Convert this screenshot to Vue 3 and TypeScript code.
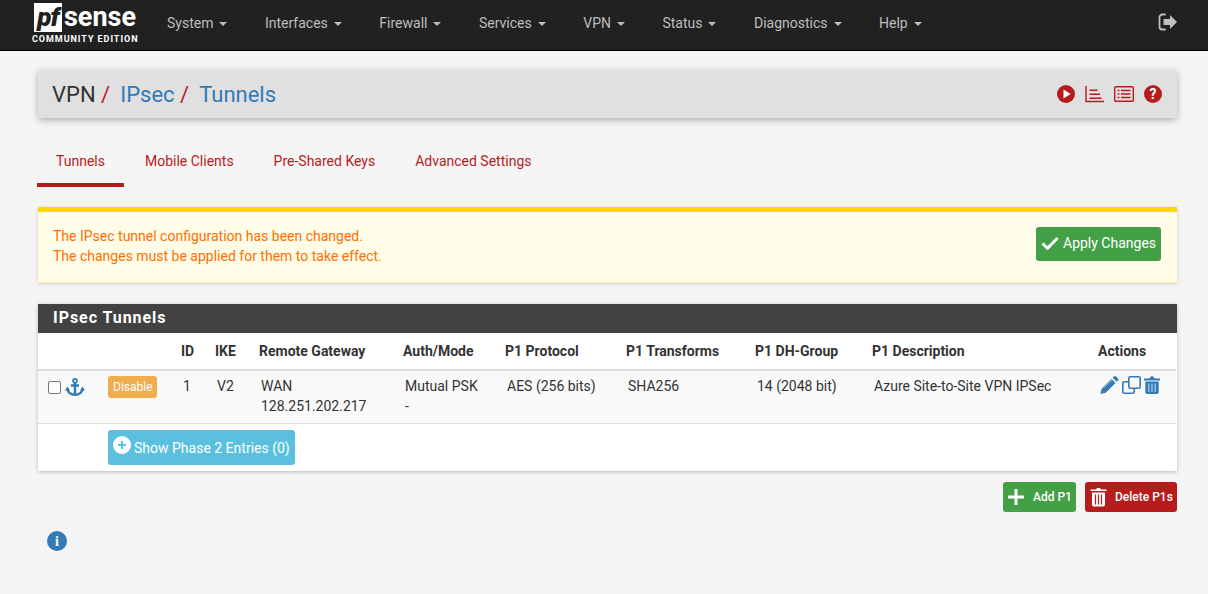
<template>
  <div class="page">
    <nav class="navbar">
      <div class="brand">
        <div class="logo-top">
          <span class="pf-box">pf</span>
          <span class="sense">sense</span>
        </div>
        <div class="edition">COMMUNITY EDITION</div>
      </div>
      <ul class="menu">
        <li v-for="m in menu" :key="m" class="menu-item">{{ m }}<span class="caret"></span></li>
      </ul>
      <svg class="logout" viewBox="0 0 20 18" width="20" height="18">
        <path d="M7 1.500H4.200A2.700 2.700 0 0 0 1.500 4.200v9.600a2.700 2.700 0 0 0 2.700 2.700H7" fill="none" stroke="#c0c0c0" stroke-width="1.800" stroke-linecap="round" />
        <path d="M5.500 6h6.500V2l7 7-7 7v-4H5.500z" fill="#c0c0c0" />
      </svg>
    </nav>

    <main class="content">
      <header class="crumbs">
        <h1>
          <span class="crumb-plain">VPN</span><span class="sep">/</span>
          <a class="crumb-link">IPsec</a><span class="sep">/</span>
          <a class="crumb-link">Tunnels</a>
        </h1>
        <div class="crumb-icons">
          <svg viewBox="0 0 18 18" width="18" height="18">
            <circle cx="9" cy="9" r="9" fill="#b71c1c" />
            <path d="M6.500 4.600v8.800L13.600 9z" fill="#fff" />
          </svg>
          <svg viewBox="0 0 19 17" width="19" height="17">
            <path d="M1 0v15.500h18" fill="none" stroke="#b71c1c" stroke-width="1.400" />
            <path d="M4.500 4.200h8M4.500 8.200h10.500M4.500 12.200h12" fill="none" stroke="#b71c1c" stroke-width="1.500" />
          </svg>
          <svg viewBox="0 0 20 16" width="20" height="16">
            <rect x=".7" y=".7" width="18.600" height="14.600" rx="1" fill="none" stroke="#b71c1c" stroke-width="1.400" />
            <path d="M3.500 4.500h2M7 4.500h9.500M3.500 8h2M7 8h9.500M3.500 11.500h2M7 11.500h9.500" fill="none" stroke="#b71c1c" stroke-width="1.700" />
          </svg>
          <svg viewBox="0 0 18 18" width="18" height="18">
            <circle cx="9" cy="9" r="9" fill="#b71c1c" />
            <text x="9" y="13.500" text-anchor="middle" class="q">?</text>
          </svg>
        </div>
      </header>

      <ul class="tabs">
        <li v-for="(t, i) in tabs" :key="t" class="tab" :class="{ active: i === 0 }">{{ t }}</li>
      </ul>

      <section class="alert">
        <div class="alert-text">
          <div>The IPsec tunnel configuration has been changed.</div>
          <div>The changes must be applied for them to take effect.</div>
        </div>
        <button class="btn btn-apply">
          <svg viewBox="0 0 18 14" width="18" height="14">
            <path d="M1.500 7.500l5 4.800L16.500 2" fill="none" stroke="#fff" stroke-width="3" />
          </svg>
          Apply Changes
        </button>
      </section>

      <section class="panel">
        <h2 class="panel-title">IPsec Tunnels</h2>
        <table>
          <colgroup>
            <col v-for="(w, i) in colWidths" :key="i" :style="{ width: w + 'px' }" />
          </colgroup>
          <thead>
            <tr>
              <th></th>
              <th></th>
              <th v-for="h in headers" :key="h">{{ h }}</th>
            </tr>
          </thead>
          <tbody>
            <tr class="tunnel">
              <td class="tools">
                <span class="checkbox"></span>
                <svg class="anchor" viewBox="0 0 20 18" width="20" height="18">
                  <circle cx="10" cy="2.800" r="2" fill="none" stroke="#337ab7" stroke-width="1.800" />
                  <path d="M10 5v12M6 7.500h8" fill="none" stroke="#337ab7" stroke-width="2.400" />
                  <path d="M2.500 10.500c0 3.800 3.500 6.300 7.500 6.300s7.500-2.500 7.500-6.300" fill="none" stroke="#337ab7" stroke-width="2.400" />
                  <path d="M0 12.500l2.500-4 2.500 4zM15 12.500l2.500-4 2.500 4z" fill="#337ab7" />
                </svg>
              </td>
              <td><span class="btn-disable">Disable</span></td>
              <td class="txt">1</td>
              <td class="txt">V2</td>
              <td class="txt">WAN<br />128.251.202.217</td>
              <td class="txt">Mutual PSK<br />-</td>
              <td class="txt">AES (256 bits)</td>
              <td class="txt">SHA256</td>
              <td class="txt">14 (2048 bit)</td>
              <td class="txt">Azure Site-to-Site VPN IPSec</td>
              <td class="actions">
                <svg viewBox="0 0 18 18" width="19" height="18">
                  <path d="M0 18l1.200-5.200L11 3l4 4-9.800 9.800zM12.200 1.800l1.200-1.200a1.600 1.600 0 0 1 2.200 0l1.800 1.800a1.600 1.600 0 0 1 0 2.200l-1.200 1.200z" fill="#337ab7" />
                  <path d="M3 12.500l8.500-8.500" stroke="#a9c8e4" stroke-width=".8" />
                </svg>
                <svg viewBox="0 0 19 18" width="19" height="18">
                  <rect x="6.800" y=".8" width="11.400" height="11.400" rx="1.500" fill="none" stroke="#337ab7" stroke-width="1.600" />
                  <path d="M6 5.800H2.300A1.500 1.500 0 0 0 .8 7.300v8.400a1.500 1.500 0 0 0 1.500 1.500h8.400a1.500 1.500 0 0 0 1.500-1.500V13" fill="none" stroke="#337ab7" stroke-width="1.600" />
                </svg>
                <svg viewBox="0 0 16 18" width="16" height="18">
                  <path d="M0 2.500h5.500L6.500.5h3l1 2H16v2H0zM1.300 5.500h13.400v10.700a1.800 1.800 0 0 1-1.800 1.800H3.100a1.800 1.800 0 0 1-1.800-1.800z" fill="#337ab7" />
                  <path d="M4.800 7.500v8.500M8 7.500v8.500M11.200 7.500v8.500" stroke="#a9c8e4" stroke-width="1.300" />
                </svg>
              </td>
            </tr>
            <tr class="phase2">
              <td></td>
              <td colspan="10">
                <button class="btn btn-phase">
                  <span class="plus-circle">
                    <svg viewBox="0 0 10 10" width="10" height="10">
                      <path d="M5 1v8M1 5h8" stroke="#5bc0de" stroke-width="2" />
                    </svg>
                  </span>
                  <span class="phase-label">Show Phase 2 Entries (0)</span>
                </button>
              </td>
            </tr>
          </tbody>
        </table>
      </section>

      <div class="bottom-actions">
        <button class="btn btn-add">
          <svg viewBox="0 0 16 16" width="16" height="16">
            <path d="M8 0v16M0 8h16" stroke="#fff" stroke-width="3" />
          </svg>
          Add P1
        </button>
        <button class="btn btn-delete">
          <svg viewBox="0 0 16 20" width="17" height="20">
            <path d="M0 2.500h5.500L6.500 1h3l1 1.500H16v1.500H0z" fill="#fff" />
            <path d="M1.500 5.500h13v12.200a1.800 1.800 0 0 1-1.800 1.800H3.300a1.800 1.800 0 0 1-1.800-1.800z" fill="#fff" />
            <path d="M5 7.500v10M8 7.500v10M11 7.500v10" stroke="#b71c1c" stroke-width="1.200" />
          </svg>
          Delete P1s
        </button>
      </div>

      <div class="info">
        <svg viewBox="0 0 20 20" width="20" height="20">
          <circle cx="10" cy="10" r="10" fill="#337ab7" />
          <text x="10" y="15" text-anchor="middle" class="i">i</text>
        </svg>
      </div>
    </main>
  </div>
</template>

<script setup lang="ts">
const menu: string[] = ['System', 'Interfaces', 'Firewall', 'Services', 'VPN', 'Status', 'Diagnostics', 'Help']
const tabs: string[] = ['Tunnels', 'Mobile Clients', 'Pre-Shared Keys', 'Advanced Settings']
const headers: string[] = [
  'ID',
  'IKE',
  'Remote Gateway',
  'Auth/Mode',
  'P1 Protocol',
  'P1 Transforms',
  'P1 DH-Group',
  'P1 Description',
  'Actions',
]
const colWidths: number[] = [60, 73, 34, 44, 144, 102, 121, 129, 117, 226, 88]
</script>

<style>
html,
body {
  margin: 0;
  background: #f5f5f5;
}
</style>

<style scoped>
.page {
  height: 594px;
  overflow: hidden;
  background: #f5f5f5;
  font-family: Roboto, "Liberation Sans", sans-serif;
  font-size: 14px;
  color: #333;
}

.navbar {
  height: 50px;
  border-bottom: 1px solid #000;
  background: #212121;
  display: flex;
  align-items: center;
  padding: 0 31px;
  position: relative;
}
.brand {
  width: 107px;
  height: 46px;
  flex: none;
  margin-top: 2px;
  color: #fff;
}
.logo-top {
  display: flex;
  align-items: center;
  height: 29px;
  padding-left: 3px;
}
.pf-box {
  width: 28px;
  height: 29px;
  background: #fff;
  color: #212121;
  font-size: 26px;
  font-weight: 900;
  font-style: italic;
  line-height: 28px;
  text-align: center;
  letter-spacing: -1px;
}
.sense {
  font-size: 27px;
  font-weight: 700;
  line-height: 29px;
  margin-left: 2px;
  letter-spacing: 0;
  white-space: nowrap;
}
.edition {
  font-size: 9px;
  font-weight: 700;
  letter-spacing: 0.95px;
  line-height: 10px;
  margin-top: 2px;
  margin-left: 1px;
  white-space: nowrap;
}
.menu {
  display: flex;
  list-style: none;
  margin: -4px 0 0 29px;
  padding: 0;
}
.menu-item {
  color: #bdbdbd;
  line-height: 20px;
  margin-right: 37.5px;
  white-space: nowrap;
}
.caret {
  display: inline-block;
  margin-left: 6px;
  vertical-align: middle;
  border-top: 4px solid #bdbdbd;
  border-left: 4px solid transparent;
  border-right: 4px solid transparent;
}
.logout {
  position: absolute;
  right: 30px;
  top: 13px;
}

.content {
  padding: 19px 31px 0 38px;
}
.crumbs {
  height: 48px;
  background: #e0e0e0;
  border-radius: 3px;
  box-shadow: 0 2px 7px rgba(0, 0, 0, 0.3);
  display: flex;
  align-items: center;
  justify-content: space-between;
  padding: 0 15px 0 14px;
}
h1 {
  margin: 0;
  font-size: 22px;
  font-weight: 400;
  color: #333;
  white-space: nowrap;
}
.sep {
  color: #b71c1c;
  margin: 0 10px 0 5.5px;
}
.crumb-link {
  color: #337ab7;
}
.crumb-icons {
  display: flex;
  align-items: center;
  gap: 10px;
}
.q {
  font: 700 14px Roboto, sans-serif;
  fill: #fff;
}
.i {
  font: 700 14px "Liberation Serif", serif;
  fill: #fff;
}

.tabs {
  list-style: none;
  margin: 19px 0 20px -1px;
  padding: 0;
  display: flex;
  height: 50px;
}
.tab {
  color: #b71c1c;
  padding: 0 19px;
  line-height: 48px;
  height: 50px;
  margin-right: 2px;
}
.tab.active {
  border-bottom: 4px solid #b71c1c;
  height: 46px;
}

.alert {
  height: 70px;
  border-top: 5px solid #ffd600;
  border-bottom: 1px solid #ffe9a8;
  background: #fffde7;
  box-shadow: 0 1px 4px rgba(0, 0, 0, 0.15);
  display: flex;
  align-items: center;
  justify-content: space-between;
  padding: 0 16px 0 15px;
  color: #ff6f00;
  line-height: 20px;
}
.alert-text {
  margin-top: -2px;
}
.btn {
  font-family: inherit;
  border: 0;
  border-radius: 3px;
  color: #fff;
  display: inline-flex;
  align-items: center;
  padding: 0;
  cursor: pointer;
  white-space: nowrap;
}
.btn-apply {
  background: #43a047;
  height: 34px;
  width: 125px;
  font-size: 14px;
  padding: 0 0 2px 5px;
  gap: 4px;
  margin-top: -7px;
}

.panel {
  margin-top: 21px;
  background: #fff;
  box-shadow: 0 1px 4px rgba(0, 0, 0, 0.25);
}
.panel-title {
  margin: 0;
  height: 29px;
  line-height: 28px;
  background: #424242;
  color: #fff;
  font-size: 16px;
  font-weight: 700;
  letter-spacing: 0.95px;
  padding-left: 15px;
}
table {
  border-collapse: collapse;
  table-layout: fixed;
  width: 1138px;
}
th {
  text-align: left;
  height: 36px;
  padding: 0 0 0 10px;
  font-size: 14px;
  font-weight: 700;
  border-bottom: 2px solid #ddd;
  white-space: nowrap;
}
td {
  padding: 5px 0 0 10px;
  vertical-align: top;
  line-height: 20px;
}
.tunnel {
  background: #f9f9f9;
  height: 53px;
  border-bottom: 1px solid #ddd;
}
.tunnel .txt {
  padding-left: 12px;
  white-space: nowrap;
}
.tools {
  display: flex;
  align-items: flex-start;
  gap: 4px;
  padding-top: 6px;
}
.checkbox {
  width: 11px;
  height: 11px;
  margin-top: 4px;
  border: 1px solid #767676;
  border-radius: 2px;
  background: #fff;
}
.anchor {
  margin-top: 1px;
}
.btn-disable {
  display: inline-block;
  background: #f0ad4e;
  color: #fff;
  border-radius: 3px;
  font-size: 12px;
  line-height: 22px;
  padding: 0 5px;
  border: 0;
  height: 22px;
  width: 39px;
  text-align: center;
}
.actions {
  display: flex;
  gap: 3px;
  align-items: flex-start;
  padding-top: 5px;
  padding-left: 12px;
}
.phase2 {
  height: 48px;
}
.phase2 td {
  padding-top: 6px;
}
.btn-phase {
  background: #5bc0de;
  height: 35px;
  width: 187px;
  font-size: 14px;
  padding-left: 5px;
  gap: 3px;
  line-height: 20px;
}
.phase-label {
  margin-top: 1px;
}
.plus-circle {
  width: 18px;
  height: 18px;
  border-radius: 50%;
  background: #fff;
  display: inline-flex;
  align-items: center;
  justify-content: center;
  margin-top: -4px;
}

.bottom-actions {
  display: flex;
  justify-content: flex-end;
  gap: 9px;
  margin-top: 11px;
}
.btn-add,
.btn-delete {
  height: 30px;
  font-size: 12px;
  font-weight: 500;
}
.btn-add {
  background: #43a047;
  width: 73px;
  padding-left: 5px;
  gap: 9px;
}
.btn-delete {
  background: #b71c1c;
  width: 92px;
  padding-left: 5px;
  gap: 8px;
}

.info {
  margin: 19px 0 0 9px;
  height: 20px;
}
</style>
